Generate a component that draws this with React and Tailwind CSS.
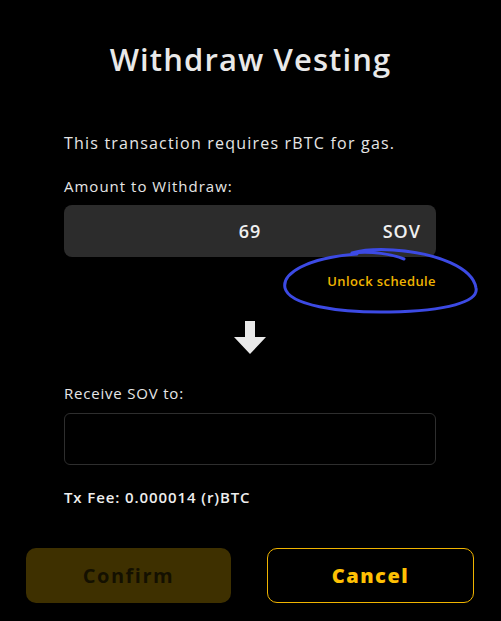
import React from 'react';

const font = { fontFamily: '"Open Sans", "Noto Sans", sans-serif' };

export default function App() {
    return (
        <div className="relative w-[501px] h-[621px] bg-black text-[#e6e6e6] overflow-hidden" style={font}>
            {/* Title */}
            <h1 className="pt-[37px] text-center text-[31px] leading-[44px] font-semibold text-[#e9e9e9] tracking-[1.1px]">
                Withdraw Vesting
            </h1>

            <div className="mx-[64px] w-[372px] mt-[51px]">
                <p className="text-[16px] leading-[22px] font-medium tracking-[1.2px]">This transaction requires rBTC for gas.</p>

                <p className="mt-[22px] text-[15px] leading-[20px] font-medium tracking-[1px]">Amount to Withdraw:</p>
                <div className="relative mt-[9px] h-[52px] rounded-lg bg-[#2c2c2c] flex items-center justify-center">
                    <span className="text-[18px] font-semibold text-[#f0f0f0] tracking-[1px]">69</span>
                    <span className="absolute right-[15px] top-1/2 -translate-y-1/2 text-[18px] font-semibold text-[#f0f0f0] tracking-[1px]">SOV</span>
                </div>
                <div className="flex justify-end mt-[14px]">
                    <span className="text-[13px] leading-[20px] font-semibold text-[#f0b400] tracking-[0.4px]">Unlock schedule</span>
                </div>

                {/* Arrow */}
                <div className="flex justify-center mt-[30px]">
                    <svg width="32" height="33" viewBox="0 0 32 33">
                        <polygon points="11,0 21,0 21,16 32,16 16,33 0,16 11,16" fill="#e9e9e9" />
                    </svg>
                </div>

                <p className="mt-[29px] text-[15px] leading-[20px] font-medium tracking-[0.8px]">Receive SOV to:</p>
                <div className="mt-[10px] h-[52px] rounded-md border border-[#2e2e2e] bg-black" />

                <p className="mt-[22px] text-[15px] leading-[20px] font-semibold text-[#eeeeee] tracking-[0.9px]">Tx Fee: 0.000014 (r)BTC</p>
            </div>

            {/* Buttons */}
            <div className="mt-[41px] ml-[26px] w-[448px] flex gap-[36px]">
                <button className="flex-1 h-[55px] rounded-[10px] bg-[#3e3000] text-[20px] font-bold text-[#141000] tracking-[1.5px]">
                    Confirm
                </button>
                <button className="flex-1 h-[55px] rounded-[10px] border-[1.5px] border-[#f0b400] bg-black text-[20px] font-extrabold text-[#fec004] tracking-[1.5px]">
                    Cancel
                </button>
            </div>

            {/* Hand-drawn annotation */}
            <svg className="absolute inset-0 pointer-events-none" width="501" height="621" viewBox="0 0 501 621">
                <path
                    d="M357 254 C305 258 282 274 285 288 C289 305 338 313 390 312 C446 311 479 302 476 288 C473 268 438 253 393 250 C377 249 363 250 352 253 M352 253 C372 251 392 254 404 259"
                    fill="none"
                    stroke="#3c4ae4"
                    strokeWidth="3"
                    strokeLinecap="round"
                />
            </svg>
        </div>
    );
}
